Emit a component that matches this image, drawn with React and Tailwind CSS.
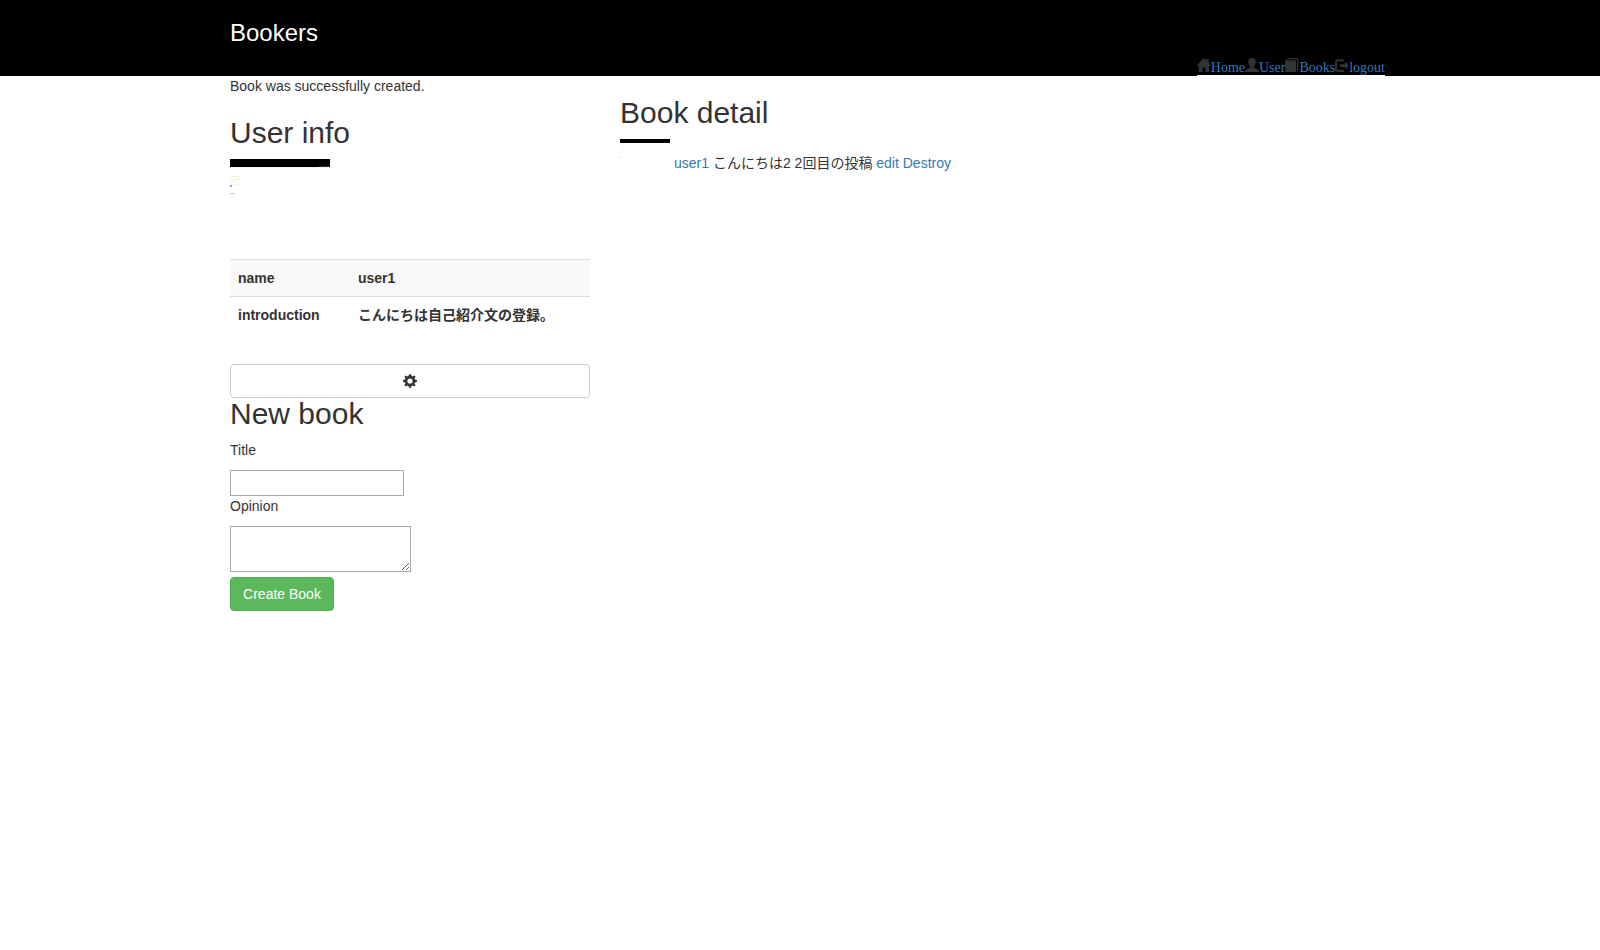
import React from "react";

const HomeIcon = () => (
  <svg className="block h-[14px] w-[14px] shrink-0" viewBox="0 0 14 14" fill="#333333">
    <path d="M7 0 L9.8 2.8 V1 H11.8 V4.8 L14 7 V7.7 H12.2 V14 H8.4 V9.4 H5.6 V14 H1.8 V7.7 H0 V7 Z" />
  </svg>
);

const UserIcon = () => (
  <svg className="block h-[14px] w-[14px] shrink-0" viewBox="0 0 14 14" fill="#333333">
    <path d="M7 0 C9.4 0 10.8 1.5 10.8 3.6 C10.8 5.8 10 7.3 8.8 8.3 V9.5 C9.2 10.2 13.7 11.3 14 12.8 V14 H0 V12.8 C.3 11.3 4.8 10.2 5.2 9.5 V8.3 C4 7.3 3.2 5.8 3.2 3.6 C3.2 1.5 4.6 0 7 0 Z" />
  </svg>
);

const BookIcon = () => (
  <svg className="block h-[14px] w-[14px] shrink-0" viewBox="0 0 14 14" fill="#333333">
    <path d="M3 0 H13.2 V12 L12 13 V1.2 H2.2 L1.3 2.2 H10.4 Q11 2.2 11 2.8 V14 H.9 Q.2 14 .2 13.3 V2.7 Z" />
  </svg>
);

const LogoutIcon = () => (
  <svg className="block h-[14px] w-[14px] shrink-0" viewBox="0 0 14 14" fill="#333333">
    <path d="M3 1.2 H8.8 V3.2 H3.2 Q2 3.2 2 4.4 V10.8 Q2 12 3.2 12 H8.8 V14 H3 Q0 14 0 11 V4.2 Q0 1.2 3 1.2 Z" />
    <path d="M10 3.7 L14.2 7.6 L10 11.5 V9 H5.2 V6.2 H10 Z" />
  </svg>
);

const CogIcon = () => (
  <svg className="block h-[14px] w-[14px]" viewBox="0 0 14 14" fill="#333333">
    <path
      fillRule="evenodd"
      d="M6 .2 H8 L8.5 2.1 L9.7 2.6 L11.4 1.5 L12.6 2.7 L11.5 4.4 L12 5.5 L13.9 6 V8 L12 8.5 L11.5 9.6 L12.6 11.3 L11.4 12.5 L9.7 11.4 L8.5 11.9 L8 13.8 H6 L5.5 11.9 L4.3 11.4 L2.6 12.5 L1.4 11.3 L2.5 9.6 L2 8.5 L.1 8 V6 L2 5.5 L2.5 4.4 L1.4 2.7 L2.6 1.5 L4.3 2.6 L5.5 2.1 Z M7 4.4 A2.6 2.6 0 1 0 7 9.6 A2.6 2.6 0 1 0 7 4.4 Z"
    />
  </svg>
);

const ProfileImage = () => (
  <svg className="block h-[100px] w-[100px]" viewBox="0 0 100 100">
    <rect width="100" height="8" fill="#000" />
    <rect x="89" y="7" width="10" height="1" fill="#132c40" />
    <rect y="8" width="100" height="1" fill="#f4f4f4" />
    <path d="M0 17.5 H8.5 V20.5 H0" fill="none" stroke="#f8edda" />
    <path d="M0 22.5 H8.5 V25.5 H0" fill="none" stroke="#f2f2f2" />
    <rect y="26" width="2" height="2" fill="#aaa" />
    <rect y="34" width="5" height="1" fill="#b9d2e6" />
  </svg>
);

const Thumbnail = () => (
  <svg className="block h-[50px] w-[50px]" viewBox="0 0 50 50">
    <rect width="50" height="4" fill="#000" />
    <rect x="44" y="3" width="5" height="1" fill="#0b1823" />
    <rect y="8" width="4" height="2" fill="#fcf7ef" />
    <rect y="11" width="4" height="1" fill="#f8f8f8" />
    <rect y="13" width="1" height="1" fill="#d8d8d8" />
    <rect y="17" width="2" height="1" fill="#e4eef5" />
  </svg>
);

const links = [
  ["Home", HomeIcon],
  ["User", UserIcon],
  ["Books", BookIcon],
  ["logout", LogoutIcon],
];

export default function App() {
  return (
    <div className="min-h-[950px] bg-white font-['Liberation_Sans','Noto_Sans_CJK_JP',sans-serif] text-[14px] leading-[20px] text-[#333333]">
      <header className="h-[76px] bg-black">
        <div className="mx-auto flex h-full w-[1170px] items-start justify-between pl-[15px]">
          <h1 className="pt-[20px] text-[24px] leading-[26px] text-white">Bookers</h1>
          <nav className="flex h-[18px] self-end border-b border-white font-['Liberation_Serif',serif] text-[14px] leading-[20px] text-[#337ab7]">
            {links.map(([label, Icon]) => (
              <a key={label} href="#" className="flex">
                <Icon />
                <span>{label}</span>
              </a>
            ))}
          </nav>
        </div>
      </header>

      <main className="mx-auto flex w-[1170px] gap-[30px] px-[15px]">
        <section className="w-[360px] shrink-0">
          <p>Book was successfully created.</p>
          <h2 className="mt-[20px] mb-[10px] text-[30px] leading-[33px]">User info</h2>
          <ProfileImage />
          <table className="mb-[30px] w-full table-fixed text-left font-bold">
            <tbody>
              <tr className="h-[37px] border-t border-[#dddddd] bg-[#f9f9f9]">
                <th className="w-[120px] px-2 py-0">name</th>
                <th className="px-2 py-0">user1</th>
              </tr>
              <tr className="h-[37px] border-t border-[#dddddd]">
                <th className="px-2 py-0">introduction</th>
                <th className="px-2 py-0">こんにちは自己紹介文の登録。</th>
              </tr>
            </tbody>
          </table>
          <button className="flex h-[34px] w-full items-center justify-center rounded-[4px] border border-[#cccccc] bg-white">
            <CogIcon />
          </button>
          <h2 className="-mt-px mb-[10px] text-[30px] leading-[33px]">New book</h2>
          <form>
            <label className="block">Title</label>
            <input type="text" className="mt-[10px] block h-[26px] w-[174px] border border-[#a9a9a9] px-px" />
            <label className="block">Opinion</label>
            <textarea className="mt-[10px] block h-[46px] w-[181px] resize border border-[#a9a9a9] p-[2px]" />
            <button type="button" className="mt-[5px] block h-[34px] w-[104px] rounded-[4px] border border-[#4cae4c] bg-[#5cb85c] text-white">
              Create Book
            </button>
          </form>
        </section>

        <section className="flex-1">
          <h2 className="mt-[20px] mb-[10px] text-[30px] leading-[33px]">Book detail</h2>
          <div className="flex gap-[4px]">
            <Thumbnail />
            <p className="mt-[14px]">
              <a href="#" className="text-[#337ab7]">user1</a> こんにちは2 2回目の投稿{" "}
              <a href="#" className="text-[#337ab7]">edit</a>{" "}
              <a href="#" className="text-[#337ab7]">Destroy</a>
            </p>
          </div>
        </section>
      </main>
    </div>
  );
}
